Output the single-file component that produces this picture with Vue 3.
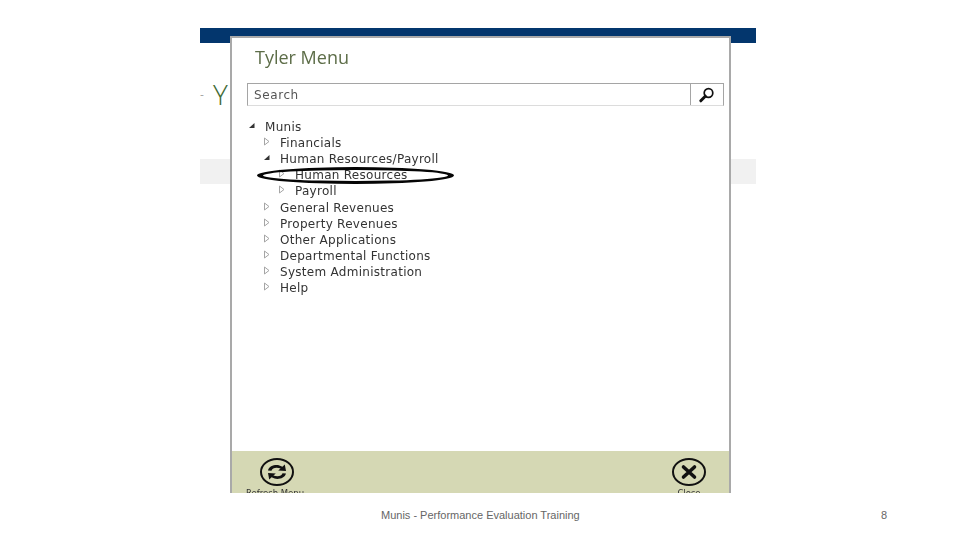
<template>
  <div class="slide">
    <div class="shot">
      <div class="topbar"></div>
      <div class="page-title"><span class="dash">-</span>Y</div>
      <div class="band"></div>

      <div class="panel">
        <h1 class="panel-title">Tyler Menu</h1>
        <div class="search">
          <span class="search-text">Search</span>
          <span class="search-btn">
            <svg width="18" height="18" viewBox="0 0 18 18">
              <circle cx="10.5" cy="7" r="4.3" fill="none" stroke="#111" stroke-width="1.7" />
              <path d="M7.3 10.2 L2.8 14.8" stroke="#111" stroke-width="3" stroke-linecap="round" />
            </svg>
          </span>
        </div>

        <div class="tree">
          <div
            v-for="item in menu"
            :key="item.label"
            class="tree-row"
            :class="'level-' + item.level"
          >
            <svg class="arrow" width="8" height="9" viewBox="0 0 8 9">
              <path v-if="item.open" d="M1 7 L6.5 2 L6.5 7 Z" fill="#333" />
              <path v-else d="M1.5 1 L6 4.5 L1.5 8 Z" fill="#fff" stroke="#a5a5a5" />
            </svg>
            <span>{{ item.label }}</span>
          </div>
        </div>

        <div class="panel-footer">
          <div class="action">
            <svg width="36" height="30" viewBox="0 0 36 30">
              <ellipse cx="18" cy="15" rx="16" ry="13" fill="none" stroke="#111" stroke-width="2" />
              <g transform="translate(18 15) scale(1.2 1) translate(-18 -15)">
                <path d="M10.5 13.5 C11.5 9 16 7.4 20 8.4 L22.5 9.8 L24.5 7.5 L25.5 14 L19 13.6 L21 11.6 C17.5 10 14 11 13.4 13.8 Z" fill="#111" />
                <path d="M25.5 16.5 C24.5 21 20 22.6 16 21.6 L13.5 20.2 L11.5 22.5 L10.5 16 L17 16.4 L15 18.4 C18.5 20 22 19 22.6 16.2 Z" fill="#111" />
              </g>
            </svg>
            <span class="action-label">Refresh Menu</span>
          </div>
          <div class="action">
            <svg width="36" height="30" viewBox="0 0 36 30">
              <ellipse cx="18" cy="15" rx="16" ry="13" fill="none" stroke="#111" stroke-width="2" />
              <path d="M12.5 10 L23.5 20 M23.5 10 L12.5 20" stroke="#111" stroke-width="3.6" stroke-linecap="round" />
            </svg>
            <span>Close</span>
          </div>
        </div>
      </div>

      <div class="marker"></div>
    </div>

    <div class="slide-footer">
      <span>Munis - Performance Evaluation Training</span>
      <span class="footer-num">8</span>
    </div>
  </div>
</template>

<script setup>
const menu = [
  { label: 'Munis', level: 0, open: true },
  { label: 'Financials', level: 1 },
  { label: 'Human Resources/Payroll', level: 1, open: true },
  { label: 'Human Resources', level: 2 },
  { label: 'Payroll', level: 2 },
  { label: 'General Revenues', level: 1 },
  { label: 'Property Revenues', level: 1 },
  { label: 'Other Applications', level: 1 },
  { label: 'Departmental Functions', level: 1 },
  { label: 'System Administration', level: 1 },
  { label: 'Help', level: 1 }
]
</script>

<style>
html, body {
  background: #fff;
}
</style>

<style scoped>
.slide {
  width: 960px;
  height: 540px;
  overflow: hidden;
  background: #fff;
  font-family: "DejaVu Sans", sans-serif;
}

.shot {
  position: relative;
  width: 556px;
  height: 465px;
  margin: 28px 0 0 200px;
}

.topbar {
  height: 15px;
  background: #03366d;
}

.page-title {
  height: 116px;
  padding-top: 33px;
  box-sizing: border-box;
  color: #3f6a35;
  font-family: "Open Sans", sans-serif;
  font-size: 28px;
  font-weight: 300;
  line-height: 36px;
}

.dash {
  display: inline-block;
  width: 13px;
  font-size: 12px;
  vertical-align: 6px;
  color: #777;
}

.band {
  height: 25px;
  background: #f1f1f1;
}

.panel {
  position: absolute;
  left: 30px;
  top: 8px;
  width: 501px;
  height: 457px;
  box-sizing: border-box;
  display: flex;
  flex-direction: column;
  overflow: hidden;
  background: #fff;
  border: 2px solid #a9a9a9;
  border-bottom: none;
  filter: blur(0.35px);
}

.panel-title {
  margin: 0;
  padding: 4px 0 0 23px;
  height: 39px;
  box-sizing: border-box;
  font-family: "Open Sans", sans-serif;
  font-size: 18px;
  font-weight: 400;
  line-height: 30px;
  color: #5d6d48;
}

.search {
  display: flex;
  align-items: center;
  justify-content: space-between;
  box-sizing: border-box;
  margin: 6px 5px 0 15px;
  height: 23px;
  border: 1px solid #a5a5a5;
  border-bottom-color: #dcdcdc;
}

.search-text {
  padding-left: 6px;
  font-size: 12px;
  letter-spacing: 0.6px;
  color: #555;
}

.search-btn {
  display: flex;
  align-items: center;
  justify-content: center;
  box-sizing: border-box;
  width: 33px;
  height: 100%;
  border-left: 1px solid #a5a5a5;
}

.tree {
  flex: 1;
  padding: 13px 0 0 16px;
}

.tree-row {
  display: flex;
  align-items: center;
  height: 16.1px;
  font-size: 12px;
  letter-spacing: 0.28px;
  color: #333;
  white-space: nowrap;
}

.arrow {
  flex: none;
  margin: -3px 9px 0 0;
}

.level-1 {
  padding-left: 15px;
}

.level-2 {
  padding-left: 30px;
}

.panel-footer {
  display: flex;
  flex: none;
  justify-content: space-between;
  height: 42px;
  padding: 6px 8px 0 13px;
  box-sizing: border-box;
  background: #d5d8b4;
}

.action {
  display: flex;
  flex-direction: column;
  align-items: center;
  flex: none;
  width: 64px;
  font-size: 8.5px;
  line-height: 12px;
  color: #333;
  white-space: nowrap;
}

.action svg {
  flex: none;
}

.action-label {
  margin-right: 4px;
}

.marker {
  position: absolute;
  left: 57px;
  top: 139px;
  width: 197px;
  height: 17px;
  box-sizing: border-box;
  border-style: solid;
  border-color: #050505;
  border-width: 3px 6px;
  border-radius: 50%;
}

.slide-footer {
  display: flex;
  justify-content: space-between;
  padding: 14px 73px 0 381px;
  font-family: "Liberation Sans", sans-serif;
  font-size: 11px;
  line-height: 16px;
  color: #666;
}
</style>
